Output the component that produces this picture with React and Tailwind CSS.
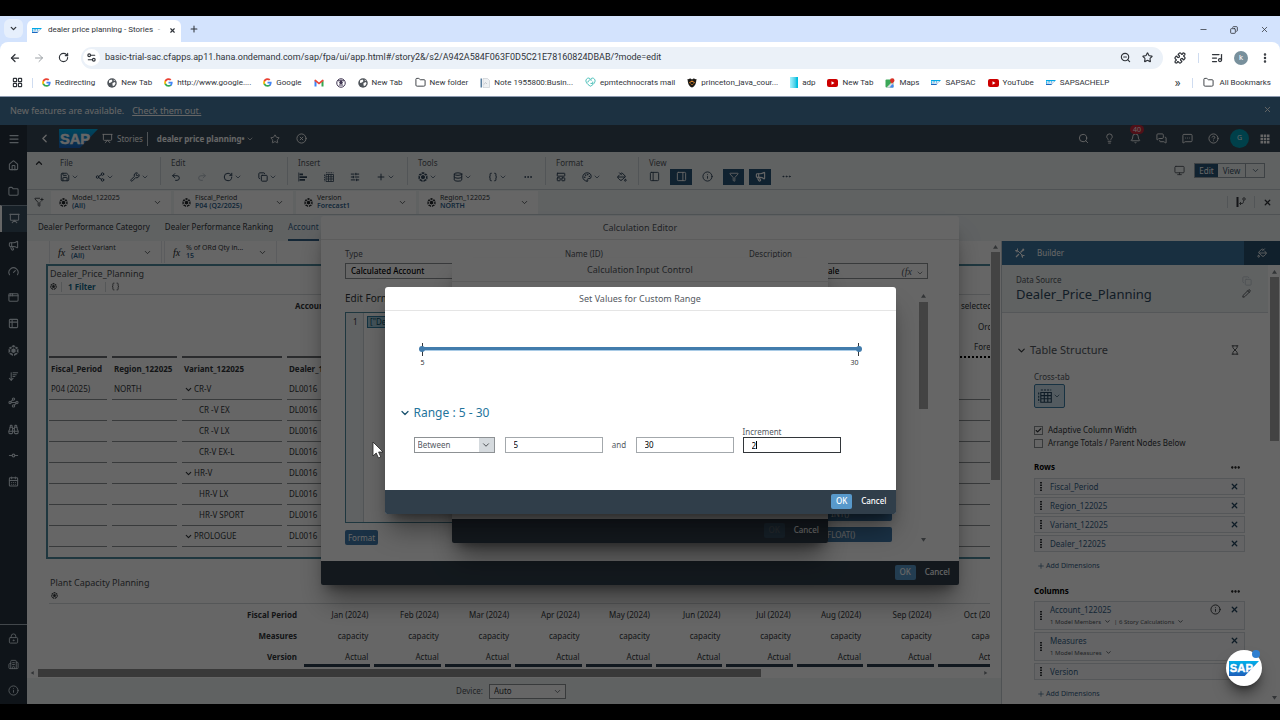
import { useState } from 'react';
import {
  AppWindow, ArrowDownWideNarrow, ArrowLeft, ArrowRight, Bell, Binoculars, Braces, Building2, CalendarDays, Check, ChevronDown,
  ChevronLeft, ChevronUp, CircleHelp, CircleX, Copy, Database, Ellipsis, EllipsisVertical, Filter, Folder, FunnelPlus, Gauge,
  GitCommitHorizontal, Hourglass, House, Info, LayoutGrid, LayoutPanelTop, Lightbulb, ListMusic, LockKeyhole, Megaphone, Menu,
  MessageSquareMore, MessagesSquare, Minus, Monitor, PaintBucket, Palette, PanelLeft, PanelRight, Pencil, Plus, Presentation, Puzzle,
  Redo2, RotateCw, Save, Search, Settings2, Share2, SlidersHorizontal, Star, Table2, Undo2, Waypoints, Wrench, X, ZoomOut,
} from 'lucide-react';

const rowData = [
  { variant: 'CR-V', parent: true, period: 'P04 (2025)', region: 'NORTH' },
  { variant: 'CR -V EX' },
  { variant: 'CR -V LX' },
  { variant: 'CR-V EX-L' },
  { variant: 'HR-V', parent: true },
  { variant: 'HR-V LX' },
  { variant: 'HR-V SPORT' },
  { variant: 'PROLOGUE', parent: true },
];

const months = ['Jan', 'Feb', 'Mar', 'Apr', 'May', 'Jun', 'Jul', 'Aug', 'Sep', 'Oct'];

function SapLogo({ className }) {
  return (
    <svg viewBox="0 0 40 20" className={className} aria-label="SAP">
      <defs>
        <linearGradient id="sap-blue" x1="0" y1="0" x2="0" y2="1">
          <stop offset="0" stopColor="#00b0ea" />
          <stop offset="1" stopColor="#1e5fbb" />
        </linearGradient>
      </defs>
      <path d="M0 0h40L21 20H0z" fill="url(#sap-blue)" />
      <text x="1" y="15" fontFamily="Liberation Sans, sans-serif" fontWeight="bold" fontSize="15" fill="#fff" stroke="#fff" strokeWidth="0.5">SAP</text>
    </svg>
  );
}

function GoogleIcon() {
  return (
    <svg viewBox="0 0 24 24" className="size-[9px]">
      <path fill="#4285f4" d="M23 12.3c0-.8-.1-1.6-.2-2.3H12v4.500h6.200a5.300 5.300 0 0 1-2.300 3.500v3h3.700c2.200-2 3.400-5 3.400-8.700z" />
      <path fill="#34a853" d="M12 23.500c3.100 0 5.700-1 7.600-2.800l-3.700-2.900a7 7 0 0 1-10.400-3.600H1.700v3A11.500 11.500 0 0 0 12 23.500z" />
      <path fill="#fbbc05" d="M5.500 14.200a7 7 0 0 1 0-4.400v-3H1.700a11.500 11.500 0 0 0 0 10.400z" />
      <path fill="#ea4335" d="M12 5.100c1.700 0 3.200.6 4.400 1.700l3.300-3.300A11.500 11.500 0 0 0 1.700 6.800l3.800 3A6.900 6.900 0 0 1 12 5.100z" />
    </svg>
  );
}

function GlobeIcon() {
  return (
    <svg viewBox="0 0 20 20" className="size-[10px]">
      <circle cx="10" cy="10" r="9.500" fill="#50555b" />
      <path d="M4 5l5-2 2 3-3 3-4 1zM11 10l5-2 1 3-3 5-3-1zM13 3l3 2-2 1z" fill="#fff" />
    </svg>
  );
}

function GmailIcon() {
  return (
    <svg viewBox="0 0 20 16" className="w-[10px]">
      <path d="M1 15V3l4 3v9z" fill="#4285f4" />
      <path d="M15 15V6l4-3v12z" fill="#34a853" />
      <path d="M1 2l2-1 7 6 7-6 2 1v2l-9 7-9-7z" fill="#ea4335" />
    </svg>
  );
}

function EyeIcon() {
  return (
    <svg viewBox="0 0 20 20" className="size-[10px]">
      <circle cx="10" cy="10" r="8.500" fill="#fff" stroke="#3d3350" strokeWidth="2" />
      <path d="M4 6c3-2 9-2 12 0M6 14h8" stroke="#3d3350" strokeWidth="2" fill="none" />
      <circle cx="10" cy="9" r="3.500" fill="#3d3350" />
    </svg>
  );
}

function YouTubeIcon() {
  return (
    <svg viewBox="0 0 22 16" className="w-[11px]">
      <rect width="22" height="16" rx="4" fill="#cc0000" />
      <path d="M9 4.500l6 3.500-6 3.500z" fill="#fff" />
    </svg>
  );
}

function NoteIcon() {
  return (
    <svg viewBox="0 0 20 20" className="size-[10px]">
      <path d="M1 1h3v18H1z" fill="#5a7f9f" />
      <path d="M6 1h9l4 4v14H6z" fill="#eef0f2" stroke="#b9bec4" />
      <path d="M8 13l3-4 3 3" stroke="#9aa1a8" fill="none" />
    </svg>
  );
}

function SwirlIcon() {
  return (
    <svg viewBox="0 0 24 22" className="w-[11px]" fill="none" stroke="#37b8b0" strokeWidth="2">
      <path d="M12 20C4 16 0 9 3 5s7-3 9 0c2-3 6-4 9 0s-1 11-9 15z" />
      <path d="M6 12c1-5 5-7 9-5M12 14h5v-4" />
    </svg>
  );
}

function ShieldIcon() {
  return (
    <svg viewBox="0 0 20 20" className="size-[10px]">
      <path d="M1 2c3 1 4-1 6-1l3 2 3-2c2 0 3 2 6 1-1 9-2 14-9 17C3 16 2 11 1 2z" fill="#1c1a17" />
      <path d="M4 9l6-4 6 4-6 5z" fill="#e88a2a" />
      <path d="M7 8h6v4H7z" fill="#1c1a17" />
    </svg>
  );
}

function MapsIcon() {
  return (
    <svg viewBox="0 0 20 20" className="size-[10px]">
      <rect x="1" y="3" width="16" height="16" rx="2" fill="#3aa757" />
      <path d="M3 19L15 7l2 2v8l-6 2z" fill="#d8dbe0" />
      <path d="M9 19l6-7 2 3v4z" fill="#4285f4" />
      <path d="M14 12c-1-3-4-4-4-7a4.500 4.500 0 0 1 9 0c0 3-4 4-5 7z" fill="#d93025" />
    </svg>
  );
}

function CubeIcon({ className }) {
  return (
    <svg viewBox="0 0 20 20" className={className} fill="currentColor">
      <path d="M10 0l4 2.200-4 2.200-4-2.200zM4.500 3l3.500 2-4 2.500L1.500 5zM15.500 3l3 2L16 7.500 12 5zM10 6l3.800 2v4.500L10 14.500l-3.800-2V8zM1 7l3 1.800v4L1 14.500zM19 7l-3 1.800v4l3 1.700zM2 16l3-1.800 4 2.300V20zM18 16l-3-1.800-4 2.300V20z" />
    </svg>
  );
}

function BarsIcon({ className }) {
  return (
    <svg viewBox="0 0 20 20" className={className} fill="none" stroke="currentColor">
      <path d="M1.500 1v18" strokeWidth="1.500" />
      <path d="M3 4.500h7M3 10h15M3 15.500h11" strokeWidth="3.500" />
    </svg>
  );
}

function GridIcon({ className }) {
  return (
    <svg viewBox="0 0 20 20" className={className} fill="none" stroke="currentColor" strokeWidth="1.600">
      <path d="M4 5h15v14H4zM4 9.500h15M4 14h15M9 5v14M14 5v14" />
      <path d="M4 1.500h15M1 5v14" strokeDasharray="3 1.500" />
    </svg>
  );
}

function NineDots({ className }) {
  return (
    <svg viewBox="0 0 20 20" className={className} fill="currentColor">
      <path d="M1 1h5v5H1zM7.500 1h5v5h-5zM14 1h5v5h-5zM1 7.500h5v5H1zM7.500 7.500h5v5h-5zM14 7.500h5v5h-5zM1 14h5v5H1zM7.500 14h5v5h-5zM14 14h5v5h-5z" />
    </svg>
  );
}

function ToolsIcon({ className }) {
  return (
    <svg viewBox="0 0 20 20" className={className} fill="none" stroke="currentColor" strokeWidth="2">
      <path d="M5 1v4H1M5 5l10 10M15 19v-4h4M1 5c1 3 3 3 5 2M15 19c-1-2-2-4-1-6" />
      <path d="M18 2l-7 7M8 12l-6 6M15 2l3 3" strokeWidth="2.500" />
    </svg>
  );
}

function BranchIcon({ className }) {
  return (
    <svg viewBox="0 0 20 20" className={className} fill="none" stroke="currentColor">
      <path d="M3 0v20" strokeWidth="4" />
      <path d="M8 13h4c3 0 3-3 3-6M10 10l-3 3 3 3" strokeWidth="1.600" />
      <circle cx="16" cy="4" r="2.500" strokeWidth="1.600" />
    </svg>
  );
}

function DragHandle() {
  return (
    <svg viewBox="0 0 4 18" className="h-[9px] w-[2px]" fill="#32363a">
      <path d="M0 0h4v3H0zM0 5h4v3H0zM0 10h4v3H0zM0 15h4v3H0z" />
    </svg>
  );
}

const bookmarks = [
  { icon: <GoogleIcon />, label: 'Redirecting' },
  { icon: <GlobeIcon />, label: 'New Tab' },
  { icon: <GoogleIcon />, label: 'http://www.google....' },
  { icon: <GoogleIcon />, label: 'Google' },
  { icon: <GmailIcon />, label: '' },
  { icon: <EyeIcon />, label: '' },
  { icon: <GlobeIcon />, label: 'New Tab' },
  { icon: <Folder className="size-[11px]" />, label: 'New folder' },
  { icon: <NoteIcon />, label: 'Note 1955800:Busin...' },
  { icon: <SwirlIcon />, label: 'epmtechnocrats mail' },
  { icon: <ShieldIcon />, label: 'princeton_java_cour...' },
  { icon: <span className="h-[11px] w-2 bg-linear-to-r from-cyan-200 to-cyan-500" />, label: 'adp' },
  { icon: <YouTubeIcon />, label: 'New Tab' },
  { icon: <MapsIcon />, label: 'Maps' },
  { icon: <SapLogo className="w-[10px]" />, label: 'SAPSAC' },
  { icon: <YouTubeIcon />, label: 'YouTube' },
  { icon: <SapLogo className="w-[10px]" />, label: 'SAPSACHELP' },
];

function Browser() {
  return (
    <header className="shrink-0 bg-[#d3e3fd] font-[Roboto,sans-serif] text-[8px] text-[#30343a]">
      <div className="flex h-[26px] items-end">
        <button aria-label="Search tabs" className="mb-1 ml-1 grid size-[19px] place-items-center rounded-md bg-[#e6effc]">
          <ChevronDown className="size-[9px]" strokeWidth={3.5} />
        </button>
        <div className="ml-1 flex h-[22px] w-[154px] items-center rounded-t-md bg-white px-[5px] pb-[2px]">
          <SapLogo className="w-[10px]" />
          <span className="ml-[6px] flex-1 truncate">dealer price planning - Stories</span>
          <span className="mr-[9px] text-[#9aa0a6]">-</span>
          <button aria-label="Close tab"><X className="size-[7px]" strokeWidth={4} /></button>
        </div>
        <button aria-label="New tab" className="mb-2 ml-2"><Plus className="size-[10px]" strokeWidth={2.5} /></button>
        <div className="mb-2 ml-auto mr-[11px] flex items-center gap-[22px]">
          <button aria-label="Minimize"><Minus className="size-[9px]" /></button>
          <button aria-label="Restore"><Copy className="size-2 -scale-x-100" strokeWidth={2.5} /></button>
          <button aria-label="Close"><X className="size-[9px]" /></button>
        </div>
      </div>
      <div className="rounded-t-lg bg-white">
        <div className="flex h-[31px] items-center pl-[9px] pr-[9px]">
          <button aria-label="Back"><ArrowLeft className="size-3" strokeWidth={2.5} /></button>
          <button aria-label="Forward" className="ml-3 text-[#9ba0a5]"><ArrowRight className="size-3" /></button>
          <button aria-label="Reload" className="ml-[13px]"><RotateCw className="size-[11px]" strokeWidth={2.5} /></button>
          <div className="ml-3 mr-[11px] flex h-[22px] flex-1 items-center rounded-full bg-[#ebf1f8] pl-[2px] pr-[10px]">
            <span className="grid size-[17px] place-items-center rounded-full bg-white">
              <Settings2 className="size-[11px]" strokeWidth={2.5} />
            </span>
            <input
              aria-label="Address"
              className="ml-[5px] flex-1 text-[9px] outline-none"
              defaultValue="basic-trial-sac.cfapps.ap11.hana.ondemand.com/sap/fpa/ui/app.html#/story2&/s2/A942A584F063F0D5C21E78160824DBAB/?mode=edit"
            />
            <button aria-label="Zoom"><ZoomOut className="size-[11px]" strokeWidth={2.5} /></button>
            <button aria-label="Bookmark" className="ml-[11px]"><Star className="size-[11px]" strokeWidth={2.5} /></button>
          </div>
          <button aria-label="Extensions"><Puzzle className="size-3" strokeWidth={2.5} /></button>
          <span className="mx-3 h-[10px] w-px bg-[#cfdcf0]" />
          <button aria-label="Media"><ListMusic className="size-3" strokeWidth={2.5} /></button>
          <span className="ml-[11px] grid size-[14px] place-items-center rounded-full bg-[#78909c] text-white">k</span>
          <button aria-label="More" className="ml-[11px]"><EllipsisVertical className="size-3" strokeWidth={3} /></button>
        </div>
        <nav className="flex h-[24px] items-center gap-3 whitespace-nowrap border-b border-[#8e9bb0] pb-1 pl-3 pr-[9px]">
          <LayoutGrid className="size-[11px]" strokeWidth={2.5} />
          <span className="-mx-[3px] h-[10px] w-px bg-[#cfdcf0]" />
          {bookmarks.map((b, i) => (
            <a key={i} href="#" aria-label={b.label || 'Bookmark ' + i} className="flex items-center gap-1">{b.icon}{b.label}</a>
          ))}
          <span className="ml-auto text-[13px] leading-none">»</span>
          <span className="h-[10px] w-px bg-[#cfdcf0]" />
          <a href="#" className="-ml-[2px] flex items-center gap-[5px]"><Folder className="size-[11px]" />All Bookmarks</a>
        </nav>
      </div>
    </header>
  );
}

const sideIcons = [House, Folder, Presentation, Megaphone, Gauge, AppWindow, Table2, CubeIcon, ArrowDownWideNarrow, Waypoints, Binoculars, GitCommitHorizontal, CalendarDays];

function Sidebar() {
  return (
    <nav className="flex w-[27px] shrink-0 flex-col bg-[#27343f] text-[#d3dee8]">
      <button aria-label="Menu" className="grid h-[27px] place-items-center"><Menu className="size-3" strokeWidth={2.5} /></button>
      <div className="grid h-[343px]">
        {sideIcons.map((Icon, i) => (
          <button
            key={i}
            aria-label={'Section ' + (i + 1)}
            className={i === 2
              ? 'grid place-items-center border-l-2 border-t border-l-white border-t-[#8596a5] bg-[#3a5061]'
              : 'grid place-items-center'}
          >
            <Icon className="size-[11px]" strokeWidth={2.3} />
          </button>
        ))}
      </div>
      <div className="mt-auto grid border-t border-[#a5b1bb]">
        <button aria-label="Security" className="grid h-[26px] place-items-center"><LockKeyhole className="size-[11px]" /></button>
        <button aria-label="Systems" className="grid h-[26px] place-items-center"><Building2 className="size-[11px]" /></button>
        <button aria-label="About" className="grid h-[27px] place-items-center"><Info className="size-[11px]" /></button>
      </div>
    </nav>
  );
}

function Shell() {
  return (
    <div className="flex h-[27px] shrink-0 items-center bg-[#374958] pl-[11px] pr-[10px] text-white">
      <button aria-label="Back"><ChevronLeft className="size-[13px]" strokeWidth={2.5} /></button>
      <SapLogo className="ml-2 w-[39px]" />
      <a href="#" className="ml-1 flex items-center gap-1 text-[8px]"><Presentation className="size-[11px]" />Stories</a>
      <span className="ml-1 mr-[9px] h-[14px] w-px bg-[#c6d0d8]" />
      <strong className="text-[8px]">dealer price planning•</strong>
      <ChevronDown className="ml-px size-2" />
      <Star className="ml-4 size-[10px]" />
      <CircleX className="ml-4 size-[11px]" />
      <div className="ml-auto flex items-center gap-[15px]">
        <Search className="size-[11px]" />
        <Lightbulb className="size-[11px]" />
        <span className="relative">
          <Bell className="size-[11px]" />
          <span className="absolute -top-2 left-0 rounded-full bg-[#c8283c] px-[3px] text-[7px] leading-[9px]">40</span>
        </span>
        <MessagesSquare className="size-[11px]" />
        <MessageSquareMore className="size-[11px]" />
        <CircleHelp className="size-[11px]" />
        <span className="-mx-1 grid size-[19px] place-items-center rounded-full bg-[#00a0b8] text-[7px]">G</span>
        <NineDots className="size-[10px]" />
      </div>
    </div>
  );
}

const toolGroups = [
  { label: 'File', cls: 'w-[111px] border-r', tools: [[Save, 1], [Share2, 1], [Wrench, 1]] },
  { label: 'Edit', cls: 'w-[127px] border-r', tools: [[Undo2, 0], [Redo2, 0], [RotateCw, 1], [Copy, 1]] },
  { label: 'Insert', cls: 'w-[120px] border-r', tools: [[BarsIcon, 0], [GridIcon, 0], [SlidersHorizontal, 0], [Plus, 1]] },
  { label: 'Tools', cls: 'w-[138px] border-r', tools: [[CubeIcon, 1], [Database, 1], [Braces, 1], [Ellipsis, 0]] },
  { label: 'Format', cls: 'w-[93px] border-r', tools: [[LayoutPanelTop, 0], [Palette, 1], [PaintBucket, 0]] },
];

function Toolbar() {
  return (
    <div className="flex h-[38px] shrink-0 items-center border-b border-[#c5cdd2] pl-[7px] pr-[15px]">
      <ChevronUp className="-mt-4 size-[10px]" strokeWidth={3} />
      <div className="ml-[6px] flex">
        {toolGroups.map((g) => (
          <div key={g.label} className={'border-[#ccd4d9] pl-[10px] ' + g.cls}>
            <div className="text-[8px] leading-[12px] text-[#54595f]">{g.label}</div>
            <div className="flex h-[16px] items-center gap-4 text-[#32465a]">
              {g.tools.map(([Icon, menu], i) => (
                <button key={i} aria-label={g.label + ' ' + (i + 1)} className={i === 1 && g.label === 'Edit' ? 'flex items-center gap-px opacity-30' : 'flex items-center gap-px'}>
                  <Icon className="size-[10px]" strokeWidth={2.4} />
                  {menu === 1 && <ChevronDown className="size-2" />}
                </button>
              ))}
            </div>
          </div>
        ))}
        <div className="pl-[10px]">
          <div className="text-[8px] leading-[12px] text-[#54595f]">View</div>
          <div className="flex h-[16px] items-center gap-[10px] text-[#32465a]">
            <PanelLeft className="size-[11px]" />
            <button aria-label="Right panel" className="grid h-[16px] w-[22px] place-items-center bg-[#2a5678] text-white"><PanelRight className="size-[11px]" /></button>
            <Info className="size-[11px]" />
            <div className="flex gap-[5px]">
              <button aria-label="Filters" className="grid h-[16px] w-[21px] place-items-center bg-[#2a5678] text-white"><Filter className="size-[10px]" /></button>
              <button aria-label="Comments" className="grid h-[16px] w-[22px] place-items-center bg-[#2a5678] text-white"><Megaphone className="size-[11px]" strokeWidth={2.5} /></button>
            </div>
            <Ellipsis className="size-[11px]" />
          </div>
        </div>
      </div>
      <Monitor className="ml-auto mr-[9px] size-[11px] text-[#54595f]" />
      <div className="flex h-[15px] border border-[#9aa4ab] text-[8px] text-[#3e5567]">
        <button className="w-[23px] bg-[#2a5678] text-white">Edit</button>
        <button className="w-[28px] border-r border-[#9aa4ab]">View</button>
        <button aria-label="More views" className="grid w-[18px] place-items-center"><ChevronDown className="size-[9px]" /></button>
      </div>
    </div>
  );
}

function FilterToken({ icon, title, value, className }) {
  return (
    <button className={'flex items-center bg-white px-2 text-left ' + className}>
      <span className="w-[13px] text-[9px] text-[#22262a]">{icon}</span>
      <span className="flex-1 text-[7px] leading-[8px] text-[#32363a]">
        {title}
        <span className="block font-semibold text-[#2f6590]">{value}</span>
      </span>
      <ChevronDown className="mr-px size-[9px]" />
    </button>
  );
}

function FilterBar() {
  const cube = <CubeIcon className="size-[9px]" />;
  return (
    <div className="flex h-[25px] shrink-0 items-center border-b border-[#c5cdd2] pl-[7px] pr-2">
      <FunnelPlus className="size-[10px]" />
      <div className="ml-[7px] flex h-[23px] gap-[3px]">
        <FilterToken icon={cube} title="Model_122025" value="(All)" className="w-[120px]" />
        <FilterToken icon={cube} title="Fiscal_Period" value="P04 (Q2/2025)" className="w-[119px]" />
        <FilterToken icon={cube} title="Version" value="Forecast1" className="w-[120px]" />
        <FilterToken icon={cube} title="Region_122025" value="NORTH" className="w-[119px]" />
      </div>
      <div className="ml-auto flex items-center">
        <span className="border-x border-[#ccd4d9] px-2 py-px"><BranchIcon className="size-[10px]" /></span>
        <button aria-label="Close filters" className="ml-2"><X className="size-[9px]" strokeWidth={3.5} /></button>
      </div>
    </div>
  );
}

function Cell({ as: Tag = 'td', line = 'border-b border-[#8d9194]', children }) {
  return (
    <Tag className="p-0 pr-[5px] text-left font-[inherit]">
      <div className={'flex h-[21px] items-center overflow-hidden whitespace-nowrap pl-[2px] ' + line}>{children}</div>
    </Tag>
  );
}

function PriceTable() {
  const thick = 'border-b-2 border-[#6a6d70]';
  const blank = 'border-0';
  const tops = [['selected', 'pl-1'], ['Order', 'pl-[21px]'], ['Forecast', 'pl-[17px]']];
  return (
    <table className="w-full table-fixed border-collapse">
      <colgroup>
        <col className="w-[63px]" /><col className="w-[70px]" /><col className="w-[105px]" /><col className="w-[105px]" /><col /><col className="w-[33px]" />
      </colgroup>
      <tbody>
        {tops.map(([text, pad], i) => (
          <tr key={text}>
            {[0, 1, 2].map((c) => <Cell key={c} line={i === 2 ? thick : blank} />)}
            <Cell line={i === 2 ? thick : blank}>{i === 0 && <strong className="pl-[6px]">Account</strong>}</Cell>
            <Cell line={i === 2 ? thick : blank} />
            <td className="p-0">
              <div className={(i === 2 ? 'h-[21px] overflow-hidden border-b-2 border-dotted border-black leading-[19px] ' : 'h-[21px] overflow-hidden leading-[21px] ') + pad}>{text}</div>
            </td>
          </tr>
        ))}
        <tr className="font-bold">
          <Cell as="th" line={blank}>Fiscal_Period</Cell>
          <Cell as="th" line={blank}>Region_122025</Cell>
          <Cell as="th" line={blank}>Variant_122025</Cell>
          <Cell as="th" line={blank}>Dealer_122025</Cell>
          <td /><td />
        </tr>
        {rowData.map((r) => (
          <tr key={r.variant}>
            <Cell>{r.period}</Cell>
            <Cell>{r.region}</Cell>
            <Cell>
              {r.parent ? <><ChevronDown className="mr-px size-[9px]" strokeWidth={3} />{r.variant}</> : <span className="pl-[15px]">{r.variant}</span>}
            </Cell>
            <Cell>DL0016</Cell>
            <Cell />
            <td className="p-0"><div className="h-[21px] border-b border-[#8d9194]" /></td>
          </tr>
        ))}
      </tbody>
    </table>
  );
}

function CapacityTable() {
  const lines = [['Fiscal Period', (m) => m + ' (2024)'], ['Measures', () => 'capacity'], ['Version', () => 'Actual']];
  return (
    <table className="w-[956px] table-fixed border-collapse text-right">
      <colgroup><col className="w-[252px]" /></colgroup>
      <tbody>
        {lines.map(([label, text], i) => (
          <tr key={label} className="h-[21px]">
            <th className="py-0 pl-0 pr-1 font-bold">{label}</th>
            {months.map((m) => (
              <td key={m} className="p-0">
                <div className={i === 2 ? 'ml-[3px] mr-px h-[21px] border-b-3 border-[#2c3d4f] pr-[2px] leading-[21px]' : 'ml-[3px] mr-px pr-[2px]'}>{text(m)}</div>
              </td>
            ))}
          </tr>
        ))}
      </tbody>
    </table>
  );
}

function Arrow({ d, className }) {
  return <svg viewBox="0 0 8 6" className={'w-[5px] ' + className} fill="#7d8388"><path d={d} /></svg>;
}

function Canvas() {
  const fx = <i className="font-[Liberation_Serif,serif] text-[10px]">fx</i>;
  return (
    <section className="flex min-w-0 flex-1 flex-col bg-white text-[8px]">
      <div className="flex min-h-0 flex-1">
        <div className="min-w-0 flex-1 overflow-hidden">
          <div className="ml-[22px] flex h-[22px] gap-[2px]">
            <FilterToken icon={fx} title="Select Variant" value="(All)" className="w-[113px] border-x border-[#e3e7ea]" />
            <FilterToken icon={fx} title="% of ORd Qty in..." value="15" className="w-[113px] border-x border-[#e3e7ea]" />
          </div>
          <div className="ml-[19px] mt-px h-[295px] border-y-2 border-l-2 border-[#4f8a9e] pl-px">
            <h2 className="pl-[1px] text-[9px] leading-[16px] text-[#4a4e52]">Dealer_Price_Planning</h2>
            <div className="flex h-[13px] items-center border-b border-[#d5d9dc] pb-[3px] pl-[1px]">
              <CubeIcon className="size-[7px]" />
              <a href="#" className="ml-1 w-[45px] border-x border-[#d5d9dc] pl-[6px] font-bold leading-[10px] text-[#146a8a]">1 Filter</a>
              <Braces className="ml-[5px] size-[9px]" />
            </div>
            <PriceTable />
          </div>
          <div className="ml-[22px] pt-[16px]">
            <h2 className="pl-px text-[9px] leading-[16px] text-[#4a4e52]">Plant Capacity Planning</h2>
            <div className="flex h-[13px] items-center border-b border-[#d5d9dc] pb-[3px] pl-[2px]"><CubeIcon className="size-[7px]" /></div>
            <CapacityTable />
          </div>
        </div>
        <div className="flex w-[11px] flex-col items-center">
          <Arrow d="M4 0l4 6H0z" className="mb-[3px] mt-1" />
          <span className="h-[228px] w-[9px] bg-[#a9a9a9]" />
        </div>
      </div>
      <div className="flex h-[10px] shrink-0 items-center pl-[3px] pr-[13px]">
        <Arrow d="M6 0v6L1 3z" className="mr-[3px]" />
        <span className="h-[8px] w-[723px] bg-[#8f8f8f]" />
        <Arrow d="M2 0v6l5-3z" className="ml-auto" />
      </div>
      <footer className="flex h-[26px] shrink-0 items-center justify-center gap-[6px] bg-[#eff4f6] pr-[6px] text-[#54595f]">
        <label htmlFor="device">Device:</label>
        <span className="relative">
          <select id="device" className="block h-[15px] w-[77px] appearance-none border border-[#8d9194] bg-white pl-1 text-[#32363a]"><option>Auto</option></select>
          <ChevronDown className="pointer-events-none absolute right-1 top-[3px] size-[9px]" />
        </span>
      </footer>
    </section>
  );
}

function DimensionItem({ name, info, children }) {
  return (
    <li className={'flex items-center border border-[#d5dade] bg-[#fafbfc] pl-[5px] pr-[5px] text-[#346187] ' + (children ? 'h-[29px]' : 'h-[17px]')}>
      <DragHandle />
      <div className="ml-2 flex-1">
        <div className="flex items-center">
          <span className="flex-1 leading-[12px]">{name}</span>
          {info && <Info className="mr-[9px] size-[11px] text-[#32363a]" />}
          <button aria-label={'Remove ' + name}><X className="size-[9px] text-[#24455f]" strokeWidth={3.5} /></button>
        </div>
        {children && <div className="flex items-center gap-[3px] text-[6px] leading-[12px] text-[#54595f]">{children}</div>}
      </div>
    </li>
  );
}

function AddDimensions() {
  return (
    <button className="mt-2 flex h-[12px] items-center gap-px pl-[3px] text-[7px] text-[#346187]"><Plus className="size-2" />Add Dimensions</button>
  );
}

function Builder() {
  return (
    <aside className="flex w-[279px] shrink-0 flex-col border-l border-[#c5cdd2] bg-white text-[8px] text-[#32363a]">
      <div className="flex h-[24px] shrink-0 items-center bg-[#3c76a1] pl-[13px] text-white">
        <ToolsIcon className="size-[10px]" />
        <span className="ml-3 flex-1">Builder</span>
        <button aria-label="Styling" className="grid h-[24px] w-[36px] place-items-center bg-[#28506e]"><PaintBucket className="size-[10px] -scale-x-100" /></button>
      </div>
      <div className="flex min-h-0 flex-1">
        <div className="min-w-0 flex-1 overflow-hidden">
          <div className="flex h-[48px] justify-between border-b border-[#d5dade] bg-[#eff4f6] pl-[14px] pr-4 pt-[9px]">
            <div>
              <div className="leading-[12px] text-[#54595f]">Data Source</div>
              <h2 className="text-[13px] leading-[17px] text-[#2f4a60]">Dealer_Price_Planning</h2>
            </div>
            <div className="flex flex-col gap-[3px] pt-[2px]">
              <Copy className="size-[10px] text-[#c3cbd1]" />
              <Pencil className="size-[9px]" />
            </div>
          </div>
          <div className="flex items-center pl-[14px] pr-7 pt-[29px]">
            <ChevronDown className="size-[11px]" strokeWidth={2.5} />
            <h3 className="ml-[3px] flex-1 text-[11px] leading-[16px] text-[#54595f]">Table Structure</h3>
            <Hourglass className="size-[10px]" />
          </div>
          <div className="pl-8 pr-[23px]">
            <div className="mt-[13px] leading-[12px] text-[#54595f]">Cross-tab</div>
            <button aria-label="Cross-tab" className="mt-px flex h-[24px] w-[31px] items-center justify-center gap-px rounded-[2px] border border-[#3d7ea6] bg-[#cfe4f1] text-[#24455f]">
              <GridIcon className="size-[14px]" /><ChevronDown className="size-2" />
            </button>
            <div className="mt-[16px] grid gap-px">
              {[['Adaptive Column Width', true], ['Arrange Totals / Parent Nodes Below', false]].map(([text, on]) => (
                <label key={text} className="flex h-[12px] items-center gap-[5px]">
                  <span className="relative size-[9px]">
                    <input type="checkbox" defaultChecked={on} className="absolute inset-0 size-[9px] appearance-none border border-[#8d9194] bg-white" />
                    {on && <Check className="absolute left-px top-px size-[7px]" strokeWidth={4} />}
                  </span>
                  {text}
                </label>
              ))}
            </div>
            <div className="mt-[12px] flex h-[12px] items-center justify-between pr-1 font-bold text-black">Rows<Ellipsis className="size-[11px]" strokeWidth={3} /></div>
            <ul className="mt-[5px] grid gap-[2px]">
              {['Fiscal_Period', 'Region_122025', 'Variant_122025', 'Dealer_122025'].map((n) => <DimensionItem key={n} name={n} />)}
            </ul>
            <AddDimensions />
            <div className="mt-[13px] flex h-[12px] items-center justify-between pr-1 font-bold text-black">Columns<Ellipsis className="size-[11px]" strokeWidth={3} /></div>
            <ul className="mt-1 grid gap-[2px]">
              <DimensionItem name="Account_122025" info>
                1 Model Members <ChevronDown className="size-[7px]" strokeWidth={3} />| 6 Story Calculations <ChevronDown className="size-[7px]" strokeWidth={3} />
              </DimensionItem>
              <DimensionItem name="Measures">1 Model Measures <ChevronDown className="size-[7px]" strokeWidth={3} /></DimensionItem>
              <DimensionItem name="Version" />
            </ul>
            <AddDimensions />
          </div>
        </div>
        <div className="flex w-[12px] flex-col items-center">
          <Arrow d="M4 0l4 6H0z" className="mb-[3px] mt-[5px]" />
          <span className="h-[164px] w-[9px] bg-[#a9a9a9]" />
          <Arrow d="M0 0h8L4 6z" className="mb-1 mt-auto" />
        </div>
      </div>
    </aside>
  );
}

function DialogFooter({ faded }) {
  return (
    <footer className="flex h-[24px] shrink-0 items-center justify-end gap-[9px] rounded-b-[2px] bg-[#303e4a] pb-[2px] pr-[9px] text-[8px] font-medium text-white">
      <button className={faded ? 'h-[15px] w-[21px] rounded-[2px] bg-[#5899cb] opacity-20' : 'h-[15px] w-[21px] rounded-[2px] bg-[#5899cb]'}>OK</button>
      <button>Cancel</button>
    </footer>
  );
}

function Dialog({ title, faded, className, children }) {
  return (
    <div className="pointer-events-none absolute inset-0 grid place-items-center">
      <section role="dialog" aria-label={title} className={'pointer-events-auto flex flex-col rounded-[3px] bg-white text-[8px] text-[#32363a] shadow-xl shadow-black/40 ' + className}>
        <h2 className="shrink-0 border-b border-[#e5e5e5] text-center text-[9px] leading-[23px] text-[#54595f]">{title}</h2>
        {children}
        <DialogFooter faded={faded} />
      </section>
    </div>
  );
}

function CalculationEditor() {
  return (
    <Dialog title="Calculation Editor" className="h-[369px] w-[638px]">
      <div className="flex min-h-0 flex-1 flex-col pl-6 pr-[31px]">
        <div className="mt-[8px] grid grid-cols-[200px_164px_1fr] gap-x-5 text-[#54595f]">
          <label htmlFor="calc-type" className="leading-[12px]">Type</label>
          <label htmlFor="calc-name" className="leading-[12px]">Name (ID)</label>
          <label htmlFor="calc-desc" className="leading-[12px]">Description</label>
          <select id="calc-type" className="mt-[3px] h-[16px] appearance-none border border-[#8d9194] bg-white pl-[5px] font-medium text-black"><option>Calculated Account</option></select>
          <input id="calc-name" className="mt-[3px] h-[16px] border border-[#8d9194]" />
          <span className="relative mt-[3px] flex h-[16px]">
            <input id="calc-desc" defaultValue="ale" className="w-full border border-[#8d9194] pl-[78px] font-medium text-black" />
            <i className="absolute right-4 top-[3px] font-[Liberation_Serif,serif] text-[10px] leading-[11px]">(fx</i>
            <ChevronDown className="absolute right-1 top-[6px] size-2" />
          </span>
        </div>
        <div className="mt-[10px] flex min-h-0 flex-1">
          <div className="w-[440px]">
            <h3 className="text-[10px] leading-[18px]">Edit Formula</h3>
            <div className="mt-[5px] flex h-[211px] border border-[#4f8a9e]">
              <span className="w-[18px] border-r border-[#ccd4d9] bg-[#f1f5f7] pl-[7px] pt-[3px]">1</span>
              <span className="ml-[3px] mt-[3px] h-[12px] border border-[#2f7da3] bg-[#a9cfe2] px-[2px] leading-[10px] text-[#0f4f68]">["Dealer_Price_Planning"]</span>
            </div>
            <button className="mt-[7px] h-[15px] w-[33px] rounded-[2px] bg-[#427cac] text-white">Format</button>
          </div>
          <div className="ml-[32px] flex flex-1 flex-col justify-end gap-[6px] pb-[19px]">
            <button className="h-[15px] rounded-[2px] bg-[#427cac] pl-[14px] text-left text-white">INT()</button>
            <button className="h-[15px] rounded-[2px] bg-[#427cac] pl-[10px] text-left text-white">FLOAT()</button>
          </div>
          <div className="ml-[26px] flex w-[10px] flex-col items-center">
            <Arrow d="M4 0l4 6H0z" className="mb-1 mt-[5px]" />
            <span className="h-[107px] w-[9px] bg-[#a9a9a9]" />
            <Arrow d="M0 0h8L4 6z" className="mb-[19px] mt-auto" />
          </div>
        </div>
      </div>
    </Dialog>
  );
}

function RangeDialog() {
  const [from, setFrom] = useState('5');
  const [to, setTo] = useState('30');
  const [step, setStep] = useState('2');
  const thumb = 'pointer-events-none absolute inset-x-0 top-[3px] h-[6px] appearance-none bg-transparent [&::-webkit-slider-thumb]:pointer-events-auto [&::-webkit-slider-thumb]:size-[6px] [&::-webkit-slider-thumb]:appearance-none [&::-webkit-slider-thumb]:rounded-full [&::-webkit-slider-thumb]:bg-[#427cac]';
  const box = 'h-[16px] w-[98px] border border-[#a3a8ac] bg-white pb-px pl-2 text-black outline-none';
  return (
    <Dialog title="Set Values for Custom Range" className="h-[227px] w-[511px]">
      <div className="flex flex-1 flex-col px-[34px] pb-[37px]">
        <div className="relative mt-[32px] h-[14px] w-[443px] max-w-full">
          <div className="absolute inset-x-[3px] top-0 h-[13px] border-x border-[#32363a]" />
          <div className="absolute inset-x-[3px] top-[4px] h-[4px] border-b border-[#a9cbe6] bg-[#427cac]" />
          <input type="range" aria-label="Range start" min="5" max="30" value={from} onChange={(e) => setFrom(e.target.value)} className={thumb} />
          <input type="range" aria-label="Range end" min="5" max="30" value={to} onChange={(e) => setTo(e.target.value)} className={thumb} />
        </div>
        <div className="flex w-[440px] justify-between pl-[2px] text-[7px] leading-[12px]"><span>5</span><span>30</span></div>
        <h3 className="-ml-5 mt-auto flex items-center text-[12px] text-[#24749c]">
          <ChevronDown className="mr-[3px] size-3 text-[#1c5470]" strokeWidth={2.5} />Range : {from} - {to}
        </h3>
        <div className="-ml-[5px] mt-1 flex items-end">
          <span className="relative">
            <select aria-label="Operator" className="block h-[16px] w-[81px] appearance-none border border-[#8d9194] bg-white pl-[3px] text-[#54595f]"><option>Between</option></select>
            <span className="pointer-events-none absolute right-px top-px grid h-[14px] w-[15px] place-items-center bg-[#d5dade]"><ChevronDown className="size-[10px]" /></span>
          </span>
          <input aria-label="From" value={from} onChange={(e) => setFrom(e.target.value)} className={'ml-[10px] ' + box} />
          <span className="w-[33px] text-center leading-[17px] text-[#54595f]">and</span>
          <input aria-label="To" value={to} onChange={(e) => setTo(e.target.value)} className={box} />
          <label className="relative ml-[9px] leading-[11px] text-[#54595f]">
            Increment
            <input value={step} onChange={(e) => setStep(e.target.value)} className="block h-[16px] w-[98px] border border-[#32363a] bg-white pl-2 text-black outline-none" />
            <span className="absolute bottom-1 left-[13px] h-2 w-px bg-black" />
          </label>
        </div>
      </div>
    </Dialog>
  );
}

export default function App() {
  return (
    <div className="flex h-screen flex-col overflow-hidden bg-black py-4">
      <Browser />
      <main className="relative flex min-h-0 flex-1 flex-col overflow-hidden bg-[#eff4f6] font-['Noto_Sans',sans-serif] text-[#32363a]">
        <div className="flex h-[28px] shrink-0 items-center bg-[#477ca3] pl-[10px] pr-2 text-[9px] text-white">
          New features are available.
          <a href="#" className="ml-2 flex-1 underline">Check them out.</a>
          <button aria-label="Dismiss" className="mb-1"><X className="size-[9px]" strokeWidth={2.5} /></button>
        </div>
        <div className="flex min-h-0 flex-1">
          <Sidebar />
          <div className="flex min-w-0 flex-1 flex-col">
            <Shell />
            <Toolbar />
            <FilterBar />
            <nav className="flex h-[26px] shrink-0 items-stretch gap-[15px] pl-[11px] text-[8px] leading-[24px]">
              <a href="#">Dealer Performance Category</a>
              <a href="#">Dealer Performance Ranking</a>
              <a href="#" className="border-b-2 border-[#346187] text-[#346187]">Account</a>
            </nav>
            <div className="flex min-h-0 flex-1">
              <Canvas />
              <Builder />
            </div>
          </div>
        </div>
        <CalculationEditor />
        <Dialog title="Calculation Input Control" faded className="h-[285px] w-[376px]"><div className="flex-1" /></Dialog>
        <div className="absolute inset-0 bg-black/60" />
        <RangeDialog />
        <button aria-label="SAP assistant" className="absolute bottom-[18px] right-[18px] grid size-9 place-items-center rounded-full bg-white shadow-lg shadow-black/50">
          <SapLogo className="w-[30px]" />
          <span className="absolute right-[2px] top-0 size-2 rounded-full bg-[#2f7fd0]" />
        </button>
        <svg viewBox="0 0 12 18" className="absolute left-[372px] top-[344px] w-[12px]">
          <path d="M1 1v14l3.200-3 2.300 5 2.300-1-2.200-5H11z" fill="#fff" stroke="#222" strokeWidth="0.800" />
        </svg>
      </main>
    </div>
  );
}
